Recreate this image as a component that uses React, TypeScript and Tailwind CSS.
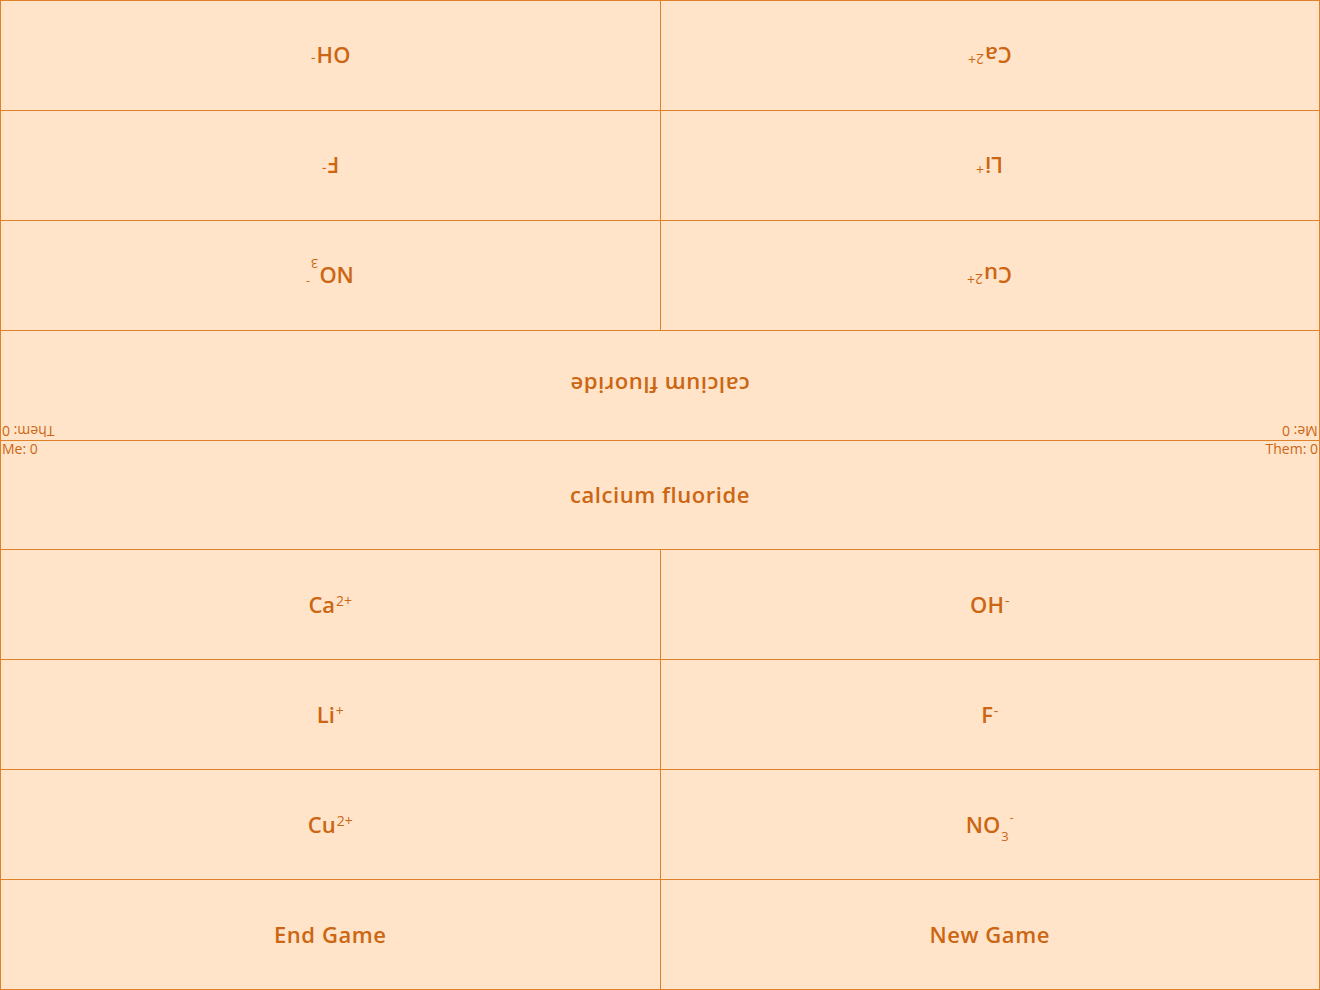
import React from "react";

const cell =
  "flex items-center justify-center bg-[#ffe4ca] text-[#cc6612] text-[22px] font-semibold";

function Ion({ base, sup, sub }: { base: string; sup?: string; sub?: string }) {
  if (sub) {
    return (
      <span className="inline-flex items-baseline">
        {base}
        <span className="relative top-[8px] ml-[1px] text-[13px] font-normal">{sub}</span>
        <span className="relative top-[-11px] ml-[1px] text-[12px] font-normal">{sup}</span>
      </span>
    );
  }
  return (
    <span>
      {base}
      <sup className="text-[14px] ml-[1px] font-normal">{sup}</sup>
    </span>
  );
}

const mine = [
  [<Ion base="Ca" sup="2+" />, <Ion base="OH" sup="-" />],
  [<Ion base="Li" sup="+" />, <Ion base="F" sup="-" />],
  [<Ion base="Cu" sup="2+" />, <Ion base="NO" sup="-" sub="3" />],
];

// opponent sits across the table, so their columns are swapped and text is upside down
const theirs = [
  [<Ion base="OH" sup="-" />, <Ion base="Ca" sup="2+" />],
  [<Ion base="F" sup="-" />, <Ion base="Li" sup="+" />],
  [<Ion base="NO" sup="-" sub="3" />, <Ion base="Cu" sup="2+" />],
];

export default function App() {
  return (
    <div
      className="relative w-[1320px] h-[990px] border border-[#e0812a] bg-[#e0812a] grid grid-cols-2 grid-rows-9 gap-px"
      style={{ fontFamily: "'Open Sans', 'DejaVu Sans', sans-serif" }}
    >
      {theirs.map((row, i) => (
        <React.Fragment key={"t" + i}>
          {row.map((ion, j) => (
            <div key={j} className={cell}>
              <div className="rotate-180">{ion}</div>
            </div>
          ))}
        </React.Fragment>
      ))}
      <div className={cell + " col-span-2"}>
        <div className="rotate-180 tracking-wide">calcium fluoride</div>
      </div>
      <div className={cell + " col-span-2"}>
        <div className="tracking-wide">calcium fluoride</div>
      </div>
      {mine.map((row, i) => (
        <React.Fragment key={"m" + i}>
          {row.map((ion, j) => (
            <div key={j} className={cell}>
              <div>{ion}</div>
            </div>
          ))}
        </React.Fragment>
      ))}
      <div className={cell}>
        <button className="tracking-wide">End Game</button>
      </div>
      <div className={cell}>
        <button className="tracking-wide">New Game</button>
      </div>

      {/* scores */}
      <div className="absolute left-[1px] top-[422px] text-[14px] leading-[17px] font-medium text-[#cc6612] rotate-180">
        Them: 0
      </div>
      <div className="absolute left-[1px] top-[439px] text-[14px] leading-[17px] font-medium text-[#cc6612]">
        Me: 0
      </div>
      <div className="absolute right-[1px] top-[422px] text-[14px] leading-[17px] font-medium text-[#cc6612] rotate-180">
        Me: 0
      </div>
      <div className="absolute right-[1px] top-[439px] text-[14px] leading-[17px] font-medium text-[#cc6612]">
        Them: 0
      </div>
    </div>
  );
}
